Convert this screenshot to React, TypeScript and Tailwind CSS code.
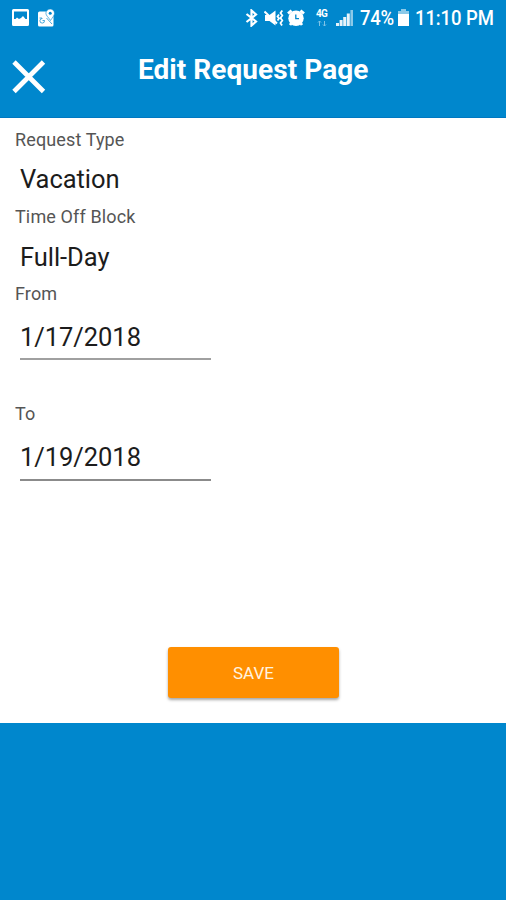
import type { ReactNode } from "react";

function PictureIcon() {
  return (
    <svg className="ml-[12px] h-[17px] w-[17px]" viewBox="0 0 17 17">
      <path
        fill="#fff"
        fillRule="evenodd"
        d="M1.500 0h14Q17 0 17 1.500v14q0 1.500-1.500 1.500h-14Q0 17 0 15.500v-14Q0 0 1.500 0ZM2 2.500v7.500h1.500l1.500-1.500 2 1.500 2-1 2-2 2.500 3H15V2.500Z"
      />
    </svg>
  );
}

function MapIcon() {
  return (
    <svg className="ml-[9px] h-[20px] w-[18px]" viewBox="0 0 18 20">
      <path fill="#fff" d="M1.500 3.500h9l5 5v8.500q0 1.500-1.500 1.500H1.500Q0 18.500 0 17V5Q0 3.500 1.500 3.500Z" />
      <path d="M4.500 10.500a2.300 2.300 0 1 0 2 2H4.500M1.500 10h2.500M8.500 10l5.500 6" stroke="#0087cd" strokeWidth="1" fill="none" opacity=".7" />
      <path
        d="M12.200 1a4.300 4.300 0 0 1 4.300 4.300c0 2.300-2 4-4 7.200C10.500 9.300 7.900 7.600 7.900 5.300A4.300 4.300 0 0 1 12.200 1Z"
        fill="#fff"
        stroke="#0087cd"
        strokeWidth=".6"
      />
      <circle cx="12.200" cy="5.300" r="1.500" fill="#0087cd" />
    </svg>
  );
}

function BluetoothIcon() {
  return (
    <svg className="h-[18px] w-[13px]" viewBox="0 0 13 18">
      <path d="M1.500 5 11 12.500 6.500 16.500V1.500L11 5.500 1.500 13" fill="none" stroke="#fff" strokeWidth="2.200" />
    </svg>
  );
}

function MuteVibrateIcon() {
  return (
    <svg className="ml-[6px] h-[18px] w-[21px]" viewBox="0 0 21 18">
      <path d="M1 6h4.500l6-4.500v15L5.500 12H1Z" fill="#fff" />
      <path d="m.5 2.500 12.500 12" stroke="#fff" strokeWidth="2" />
      <path d="m15 5.500-1.500 2L15 9.500l-1.500 2M18.300 1.500 16.500 4l1.800 2.500L16.500 9l1.800 2.500-1.800 2.500 1.500 2.500" fill="none" stroke="#fff" strokeWidth="1.800" />
    </svg>
  );
}

function AlarmIcon() {
  return (
    <svg className="ml-[2px] h-[18px] w-[19px]" viewBox="0 0 19 18">
      <path d="M1 4.500 4.500 1.500M17 4.500l-3.500-3M4.500 14l-1.500 2M13.500 14l1.500 2" stroke="#fff" strokeWidth="2.800" />
      <circle cx="9" cy="9.200" r="7.700" fill="#fff" />
      <path d="M8.800 5.500v4.200H12" fill="none" stroke="#0087cd" strokeWidth="1.300" />
    </svg>
  );
}

function NetworkIcon() {
  return (
    <div className="ml-[10px] flex h-[18px] w-[11px] flex-col items-center">
      <span className="h-[10px] text-[10px] leading-[10px] font-bold tracking-[-0.8px]">4G</span>
      <svg className="mt-[1px] h-[7px] w-[10px] opacity-50" viewBox="0 0 10 7">
        <path d="M2.500 6V1M1 2.500 2.500 1 4 2.500M7.500 1v5M6 4.500 7.500 6 9 4.500" fill="none" stroke="#fff" strokeWidth="1" />
      </svg>
    </div>
  );
}

function SignalIcon() {
  return (
    <svg className="ml-[9px] h-[17px] w-[18px]" viewBox="0 0 18 17">
      <path d="M0 14h3v3H0ZM3.600 11h3v6h-3ZM7.200 8h3v9h-3ZM10.800 4.500h3V17h-3Z" fill="#fff" opacity=".9" />
      <path d="M14.400 1h2.600v16h-2.600Z" fill="#fff" opacity=".55" />
    </svg>
  );
}

function BatteryIcon() {
  return (
    <svg className="ml-[3px] h-[18px] w-[11px]" viewBox="0 0 11 18">
      <path d="M3 0h5v2h3v4H0V2h3Z" fill="#fff" opacity=".55" />
      <path d="M0 5h11v12H0Z" fill="#fff" />
    </svg>
  );
}

function StatusBar() {
  return (
    <div className="flex h-[35px] items-center">
      <PictureIcon />
      <MapIcon />
      <div className="ml-[189px] flex items-center">
        <BluetoothIcon />
        <MuteVibrateIcon />
        <AlarmIcon />
        <NetworkIcon />
        <SignalIcon />
        <div className="ml-[6px] w-[35px]">
          <span className="inline-block origin-left scale-x-[0.88] text-[21px] leading-[36px] font-medium tracking-[-0.3px]">74%</span>
        </div>
        <BatteryIcon />
        <div className="ml-[6px] w-[80px]">
          <span className="inline-block origin-left scale-x-[0.88] text-[21px] leading-[36px] font-medium tracking-[-0.1px] whitespace-nowrap">
            11:10 PM
          </span>
        </div>
      </div>
    </div>
  );
}

function Label({ children }: { children: ReactNode }) {
  return <div className="h-[24px] pl-[15px] text-[18px] leading-[24px] tracking-[0.13px] text-[#555]">{children}</div>;
}

function Value({ children }: { children: ReactNode }) {
  return <div className="h-[36px] text-[25.500px] leading-[36px] tracking-[-0.05px] text-[#1c1c1c]">{children}</div>;
}

export default function App() {
  return (
    <div className="flex h-[900px] w-[506px] flex-col overflow-hidden bg-[#0087cd] font-[Roboto,sans-serif] text-white">
      <header className="h-[118px] border-b border-[#0078c1]">
        <StatusBar />
        <div className="flex">
          <svg className="mt-[25px] ml-[12px] h-[34px] w-[34px]" viewBox="0 0 34 34">
            <path d="M2 2 31.500 31.500M31.500 2 2 31.500" stroke="#fff" strokeWidth="4.800" />
          </svg>
          <h1 className="mt-[17px] ml-[92px] text-[28px] leading-[36px] font-bold tracking-[0.05px] whitespace-nowrap">
            Edit Request Page
          </h1>
        </div>
      </header>
      <main className="flex h-[605px] flex-col bg-white">
        <div className="pt-[10px]">
          <Label>Request Type</Label>
        </div>
        <div className="pt-[9px] pl-[20px]">
          <Value>Vacation</Value>
        </div>
        <div className="pt-[8px]">
          <Label>Time Off Block</Label>
        </div>
        <div className="pt-[10px] pl-[20px]">
          <Value>Full-Day</Value>
        </div>
        <div className="pt-[7px]">
          <Label>From</Label>
        </div>
        <div className="mt-[13px] ml-[20px] h-[41px] w-[191px] border-b-2 border-[#a0a0a0]">
          <Value>1/17/2018</Value>
        </div>
        <div className="pt-[42px]">
          <Label>To</Label>
        </div>
        <div className="mt-[13px] ml-[20px] h-[42px] w-[191px] border-b-2 border-[#8b8b8b]">
          <Value>1/19/2018</Value>
        </div>
        <button className="mt-[166px] ml-[168px] h-[51px] w-[171px] rounded-[3px] bg-[#ff8f00] text-[17px] leading-[52px] text-[#fff3e0] shadow-[0_2px_3px_rgba(0,0,0,0.35)]">
          SAVE
        </button>
      </main>
    </div>
  );
}
